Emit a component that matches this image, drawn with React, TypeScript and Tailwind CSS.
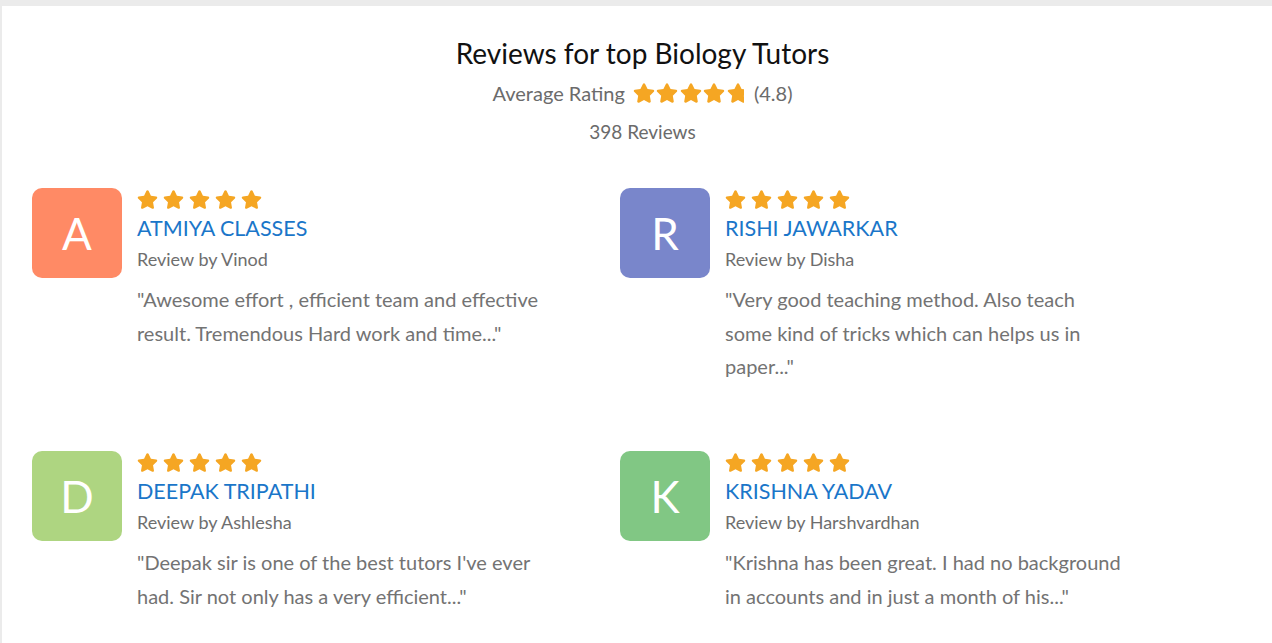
import React from 'react'
import { FaStar } from 'react-icons/fa'

type Review = {
  letter: string
  color: string
  tutor: string
  reviewer: string
  text: string
  textWidth: string
}

const reviews: Review[] = [
  {
    letter: 'A',
    color: 'bg-[#ff8a65]',
    tutor: 'ATMIYA CLASSES',
    reviewer: 'Vinod',
    text: '"Awesome effort , efficient team and effective result. Tremendous Hard work and time..."',
    textWidth: 'w-[405px]',
  },
  {
    letter: 'R',
    color: 'bg-[#7986cb]',
    tutor: 'RISHI JAWARKAR',
    reviewer: 'Disha',
    text: '"Very good teaching method. Also teach some kind of tricks which can helps us in paper..."',
    textWidth: 'w-[398px]',
  },
  {
    letter: 'D',
    color: 'bg-[#aed581]',
    tutor: 'DEEPAK TRIPATHI',
    reviewer: 'Ashlesha',
    text: '"Deepak sir is one of the best tutors I\'ve ever had. Sir not only has a very efficient..."',
    textWidth: 'w-[405px]',
  },
  {
    letter: 'K',
    color: 'bg-[#81c784]',
    tutor: 'KRISHNA YADAV',
    reviewer: 'Harshvardhan',
    text: '"Krishna has been great. I had no background in accounts and in just a month of his..."',
    textWidth: 'w-[405px]',
  },
]

function ReviewCard({ r }: { r: Review }) {
  return (
    <div className="flex">
      <div
        className={`w-[90px] h-[90px] shrink-0 rounded-[10px] ${r.color} flex items-center justify-center text-white text-[44px] leading-none`}
      >
        {r.letter}
      </div>
      <div className="ml-[15px]">
        <div className="flex gap-[5px] h-[22px] items-center text-[#f5a623]">
          {[...Array(5)].map((_, i) => (
            <FaStar key={i} size={21} />
          ))}
        </div>
        <p className="text-[#1a76c9] text-[21.5px] leading-[30px] mt-[3px] whitespace-nowrap">{r.tutor}</p>
        <p className="text-[#6e6e6e] text-[18px] leading-[30px] mt-[1px]">Review by {r.reviewer}</p>
        <p className={`${r.textWidth} text-[#737373] text-[20px] leading-[33.5px] mt-[9px]`}>{r.text}</p>
      </div>
    </div>
  )
}

export default function App() {
  return (
    <div className="h-[643px] overflow-hidden bg-[#ebebeb] pt-[6px] pl-[2px]" style={{ fontFamily: 'Lato, "Noto Sans", sans-serif' }}>
      <div className="bg-white h-full">
        <div className="flex flex-col items-center pt-[29px] pl-[11px]">
          <h2 className="text-[28px] leading-[36px] text-[#111]">Reviews for top Biology Tutors</h2>
          <div className="flex items-center mt-[7px] text-[20px] text-[#6b6b6b] leading-[30px]">
            <span>Average Rating</span>
            <span className="flex ml-[8px] gap-[1.5px] text-[#f5a623]">
              {[...Array(4)].map((_, i) => (
                <FaStar key={i} size={22} />
              ))}
              <span className="w-[17px] overflow-hidden">
                <FaStar size={22} />
              </span>
            </span>
            <span className="ml-[10px]">(4.8)</span>
          </div>
          <p className="text-[19px] text-[#6b6b6b] leading-[30px] mt-[9px]">398 Reviews</p>
        </div>
        <div className="grid grid-cols-[588px_1fr] pl-[30px] mt-[41px]">
          {reviews.map((r) => (
            <div key={r.tutor} className="h-[263px]">
              <ReviewCard r={r} />
            </div>
          ))}
        </div>
      </div>
    </div>
  )
}
